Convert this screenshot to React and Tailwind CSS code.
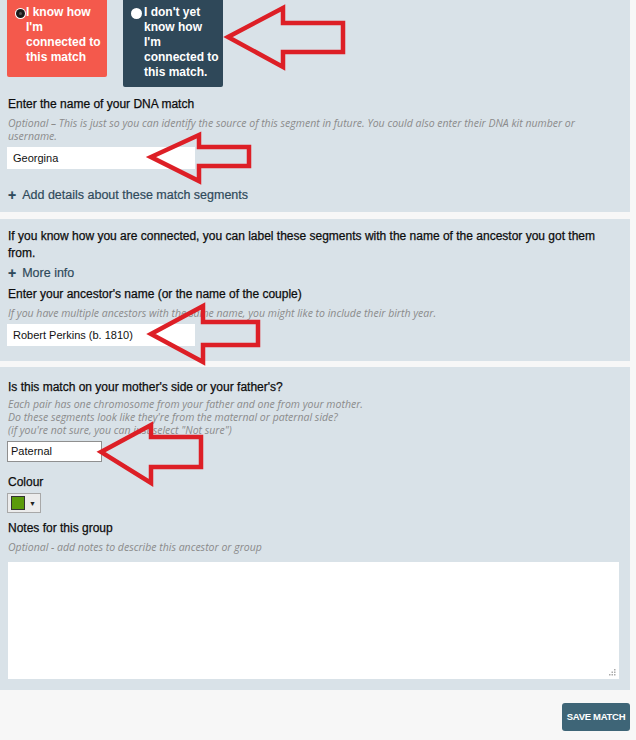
import React from 'react';

const Arrow = ({ points }) => (
    <polygon points={points} fill="none" stroke="#dd1f26" strokeWidth="4.5" strokeLinejoin="miter" />
);

const Radio = ({ checked }) => (
    checked ? (
        <span className="mt-[3px] w-[11px] h-[11px] shrink-0 rounded-full bg-white flex items-center justify-center">
            <span className="w-[9px] h-[9px] rounded-full bg-[#1b1b1b] flex items-center justify-center">
                <span className="w-[3px] h-[3px] rounded-full bg-[#555]" />
            </span>
        </span>
    ) : (
        <span className="mt-[3px] w-[11px] h-[11px] shrink-0 rounded-full bg-white" />
    )
);

const Heading = ({ className = '', children }) => (
    <div className={`text-[12px] leading-4 text-[#0d0d0d] [-webkit-text-stroke:0.25px_#0d0d0d] ${className}`}>{children}</div>
);

const Hint = ({ className = '', children }) => (
    <div className={`font-['Open_Sans',sans-serif] italic text-[10.5px] leading-[13px] text-[#8b8b8b] ${className}`}>{children}</div>
);

const AddLink = ({ className = '', children }) => (
    <div className={`flex items-center gap-[6px] text-[12.5px] leading-4 text-[#2f4a5b] [-webkit-text-stroke:0.2px_#2f4a5b] ${className}`}>
        <span className="font-bold text-[14px] leading-4 ml-[1px]">+</span>
        <span>{children}</span>
    </div>
);

export default function App() {
    return (
        <div className="relative w-[636px] min-h-[740px] bg-[#f7f7f7] font-['Liberation_Sans',Arial,sans-serif] overflow-hidden">
            {/* Match section */}
            <div className="w-[630px] bg-[#d9e2e8] px-[7px] pb-[9px]">
                <div className="flex items-start gap-[16px]">
                    <div className="w-[100px] h-[77px] bg-[#f4594c] rounded-b-[2px] flex pl-[8px] pt-[5px] text-white font-bold text-[12px] leading-[15px]">
                        <Radio checked />
                        <span className="whitespace-nowrap">I know how<br />I'm<br />connected to<br />this match</span>
                    </div>
                    <div className="w-[100px] h-[87px] bg-[#2f4859] rounded-b-[2px] flex pl-[8px] pt-[5px] text-white font-bold text-[12px] leading-[15px]">
                        <Radio />
                        <span className="ml-[2px] whitespace-nowrap">I don't yet<br />know how<br />I'm<br />connected to<br />this match.</span>
                    </div>
                </div>

                <Heading className="mt-[9px] ml-[1px]">Enter the name of your DNA match</Heading>
                <Hint className="mt-[5px] ml-[1px]">
                    Optional – This is just so you can identify the source of this segment in future. You could also enter their DNA kit number or
                    <br />
                    username.
                </Hint>
                <div className="mt-[4px] w-[188px] h-[22px] bg-white flex items-center px-[6px] text-[11px] text-[#111]">Georgina</div>
                <AddLink className="mt-[18px]">Add details about these match segments</AddLink>
            </div>

            {/* Ancestor section */}
            <div className="mt-[7px] w-[630px] bg-[#d9e2e8] px-[7px] pt-[9px] pb-[15px]">
                <div className="text-[12px] leading-[17px] text-[#0d0d0d] [-webkit-text-stroke:0.25px_#0d0d0d] ml-[1px]">
                    If you know how you are connected, you can label these segments with the name of the ancestor you got them from.
                </div>
                <AddLink className="mt-[3px]">More info</AddLink>
                <Heading className="mt-[5px] ml-[1px]">Enter your ancestor's name (or the name of the couple)</Heading>
                <Hint className="mt-[5px] ml-[1px]">If you have multiple ancestors with the same name, you might like to include their birth year.</Hint>
                <div className="mt-[4px] w-[188px] h-[22px] bg-white flex items-center px-[6px] text-[11px] text-[#111]">Robert Perkins (b. 1810)</div>
            </div>

            {/* Side / colour / notes section */}
            <div className="mt-[6px] w-[630px] bg-[#d9e2e8] px-[7px] pt-[12px] pb-[11px]">
                <Heading className="ml-[1px]">Is this match on your mother's side or your father's?</Heading>
                <Hint className="mt-[3px] ml-[1px]">
                    Each pair has one chromosome from your father and one from your mother.
                    <br />
                    Do these segments look like they're from the maternal or paternal side?
                    <br />
                    (if you're not sure, you can just select "Not sure")
                </Hint>
                <div className="mt-[4px] w-[95px] h-[21px] bg-white border border-[#8f8f8f] flex items-center px-[3px] text-[11px] text-[#111]">Paternal</div>
                <Heading className="mt-[12px] ml-[1px]">Colour</Heading>
                <div className="mt-[3px] w-[34px] h-[20px] bg-[#ececec] border border-[#a8a8a8] flex items-center pl-[3px] gap-[4px]">
                    <span className="w-[14px] h-[14px] bg-[#5b9b0c] border border-[#333]" />
                    <span className="text-[7px] leading-none text-[#222]">▼</span>
                </div>
                <Heading className="mt-[7px] ml-[1px]">Notes for this group</Heading>
                <Hint className="mt-[5px] ml-[1px]">Optional - add notes to describe this ancestor or group</Hint>
                <div className="relative mt-[8px] ml-[1px] w-[611px] h-[117px] bg-white">
                    <svg className="absolute right-[3px] bottom-[3px]" width="7" height="7" viewBox="0 0 7 7">
                        <rect x="5" y="0" width="1.5" height="1.5" fill="#aaa" />
                        <rect x="2.5" y="2.5" width="1.5" height="1.5" fill="#aaa" />
                        <rect x="5" y="2.5" width="1.5" height="1.5" fill="#aaa" />
                        <rect x="0" y="5" width="1.5" height="1.5" fill="#aaa" />
                        <rect x="2.5" y="5" width="1.5" height="1.5" fill="#aaa" />
                        <rect x="5" y="5" width="1.5" height="1.5" fill="#aaa" />
                    </svg>
                </div>
            </div>

            <div className="w-[630px] flex justify-end mt-[13px]">
                <button className="w-[68px] h-[28px] rounded-[3px] bg-[#3e6577] text-white font-bold text-[9.5px] tracking-[-0.3px]">SAVE MATCH</button>
            </div>

            {/* Annotation arrows */}
            <svg className="absolute inset-0 pointer-events-none" width="636" height="740" viewBox="0 0 636 740">
                <Arrow points="228,37 283,8 283,23 343,23 343,52 283,52 283,67" />
                <Arrow points="151,157 199,135 199,147 249,147 249,166 199,166 199,181" />
                <Arrow points="151,334 203,306 203,322 258,322 258,345 203,345 203,362" />
                <Arrow points="101,452 151,425 151,437 201,437 201,467 151,467 151,483" />
            </svg>
        </div>
    );
}
